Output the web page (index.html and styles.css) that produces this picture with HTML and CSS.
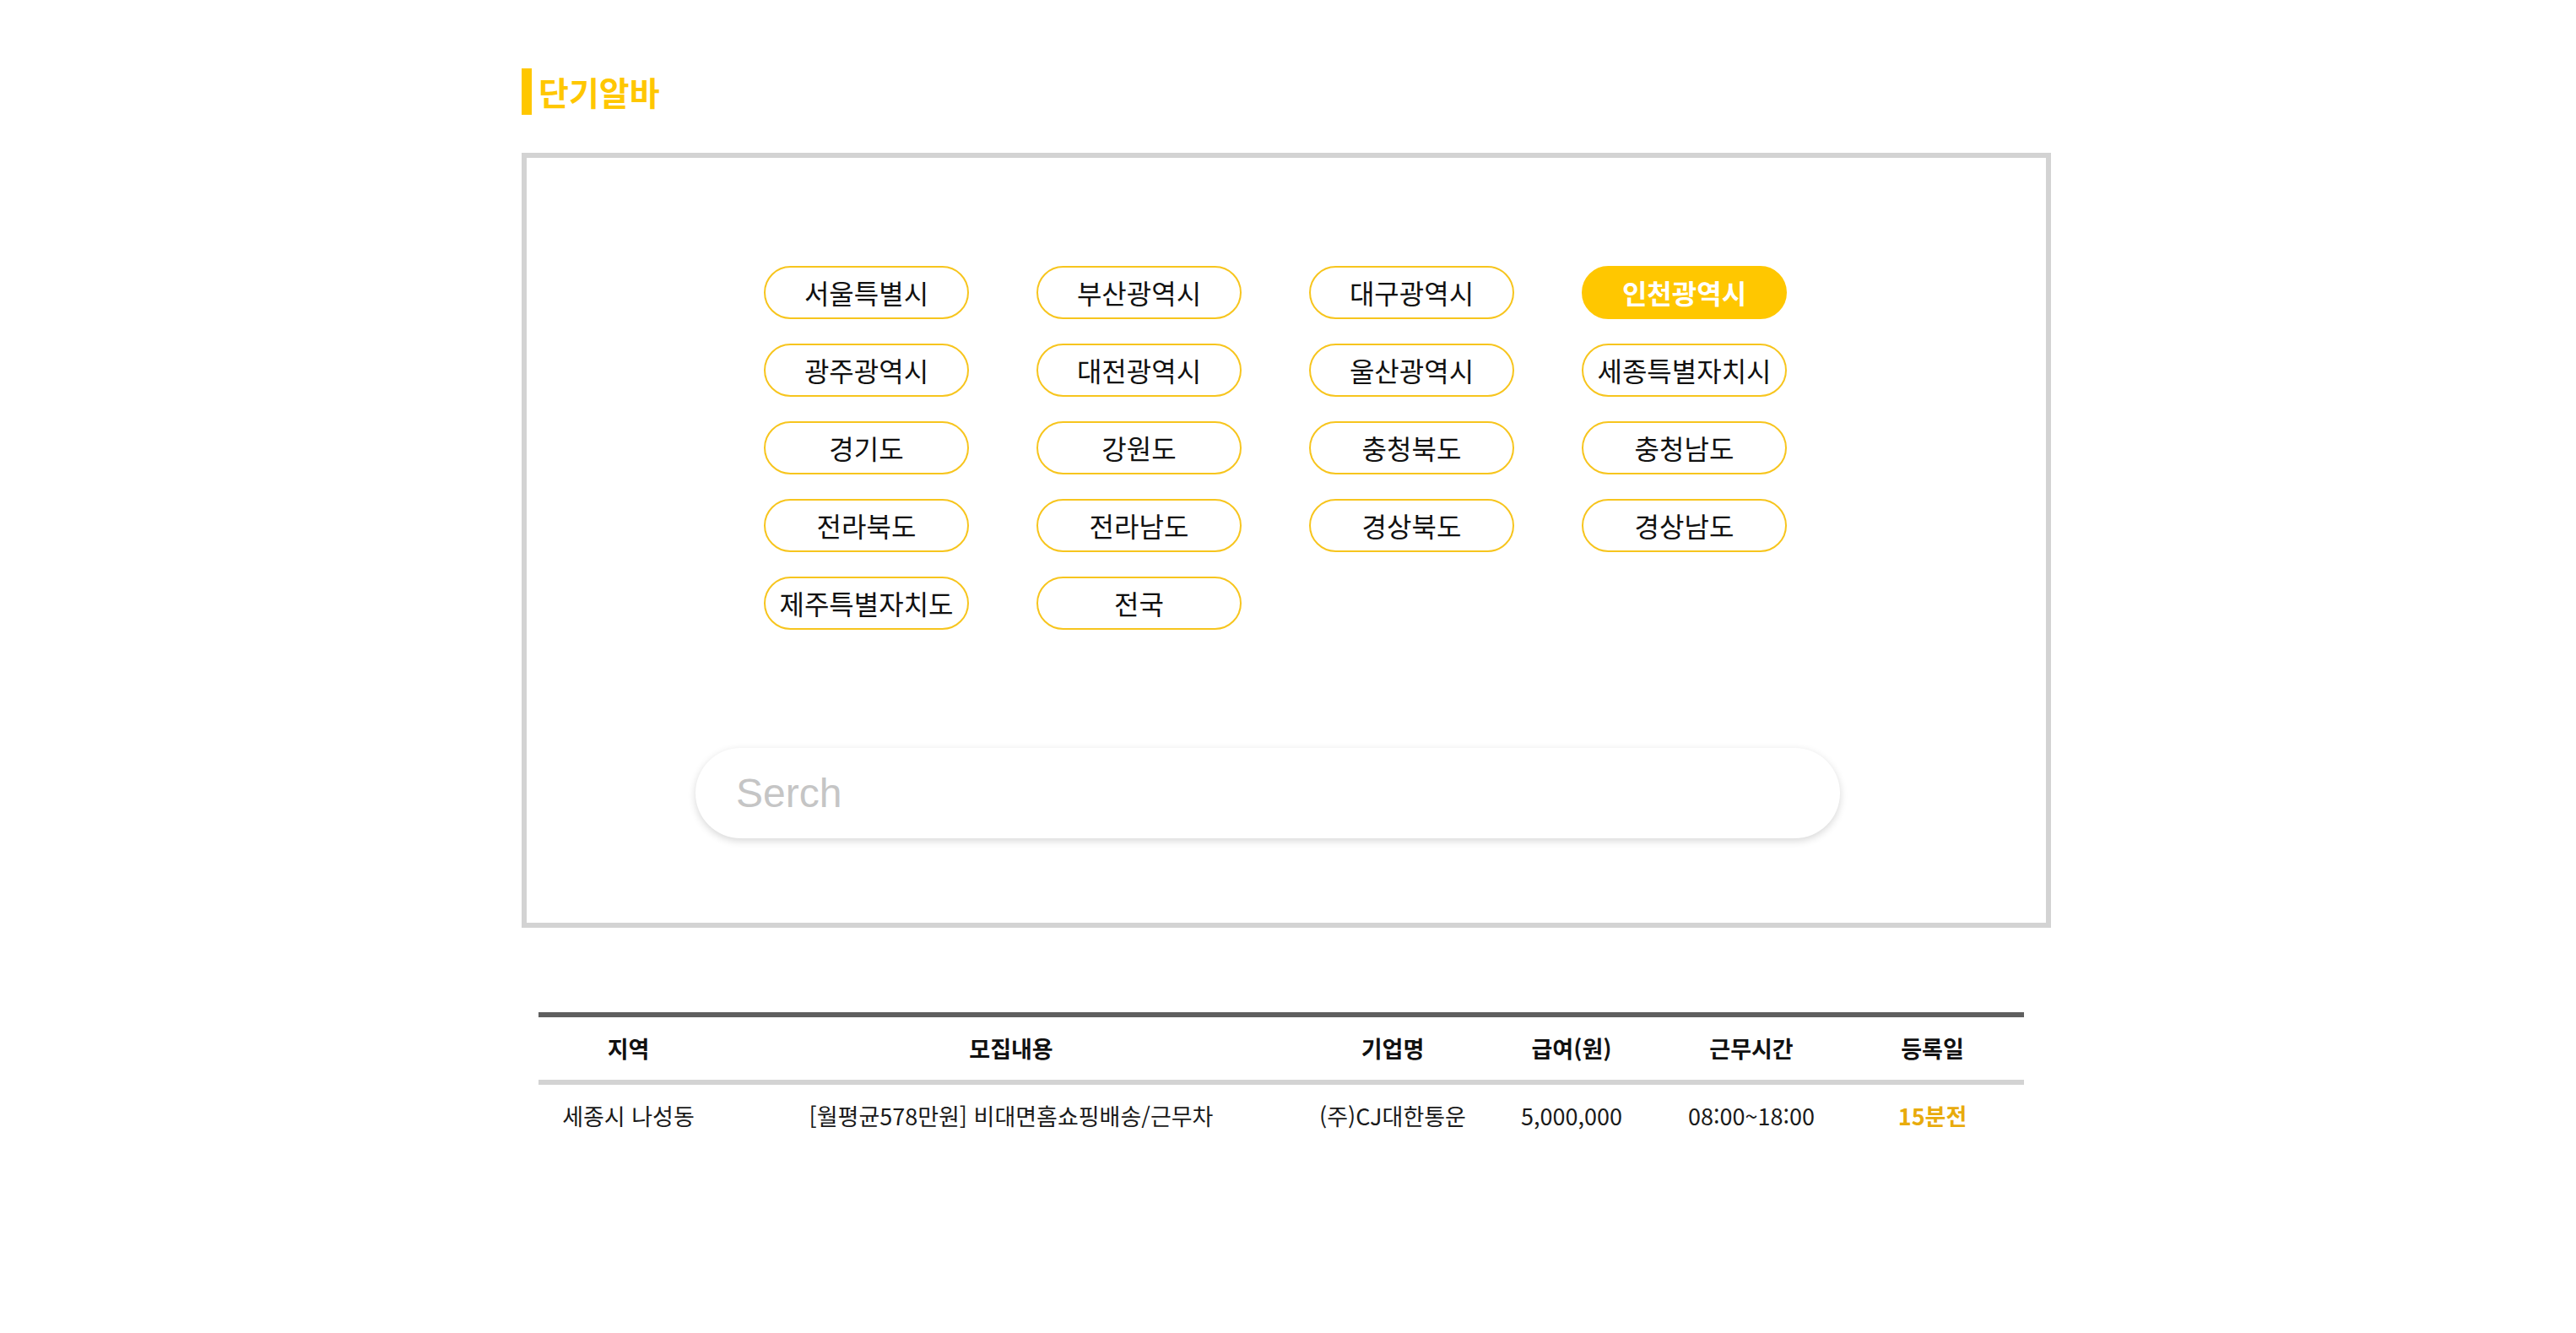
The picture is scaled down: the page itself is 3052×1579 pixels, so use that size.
FILE: index.html
```html
<!DOCTYPE html>
<html lang="ko">
<head>
<meta charset="utf-8">
<title>단기알바</title>
<link rel="stylesheet" href="styles.css">
</head>
<body>
<div class="wrap">
  <h2 class="title">단기알바</h2>
  <section class="panel">
    <ul class="regions">
      <li class="pill">서울특별시</li>
      <li class="pill">부산광역시</li>
      <li class="pill">대구광역시</li>
      <li class="pill active">인천광역시</li>
      <li class="pill">광주광역시</li>
      <li class="pill">대전광역시</li>
      <li class="pill">울산광역시</li>
      <li class="pill">세종특별자치시</li>
      <li class="pill">경기도</li>
      <li class="pill">강원도</li>
      <li class="pill">충청북도</li>
      <li class="pill">충청남도</li>
      <li class="pill">전라북도</li>
      <li class="pill">전라남도</li>
      <li class="pill">경상북도</li>
      <li class="pill">경상남도</li>
      <li class="pill">제주특별자치도</li>
      <li class="pill">전국</li>
    </ul>
    <div class="search">
      <input class="search-input" type="text" placeholder="Serch">
    </div>
  </section>
  <table class="jobs">
    <colgroup>
      <col class="c1"><col class="c2"><col class="c3"><col class="c4"><col class="c5"><col class="c6">
    </colgroup>
    <thead>
      <tr>
        <th>지역</th>
        <th>모집내용</th>
        <th>기업명</th>
        <th>급여(원)</th>
        <th>근무시간</th>
        <th>등록일</th>
      </tr>
    </thead>
    <tbody>
      <tr>
        <td>세종시 나성동</td>
        <td>[월평균578만원] 비대면홈쇼핑배송/근무차</td>
        <td>(주)CJ대한통운</td>
        <td>5,000,000</td>
        <td>08:00~18:00</td>
        <td class="recent">15분전</td>
      </tr>
    </tbody>
  </table>
</div>
</body>
</html>
```

FILE: styles.css
```css
* {
  box-sizing: border-box;
}

html, body {
  margin: 0;
  padding: 0;
  background: #ffffff;
}

body {
  font-family: "Noto Sans CJK KR", "Noto Sans", sans-serif;
  color: #111111;
}

.wrap {
  width: 1812px;
  margin-left: 618px;
  padding-top: 81px;
  padding-bottom: 200px;
}

.title {
  margin: 0;
  height: 55px;
  border-left: 12px solid #ffc700;
  padding-left: 8px;
  font-size: 39px;
  line-height: 55px;
  font-weight: 700;
  color: #ffc700;
}

.panel {
  margin-top: 45px;
  border: 6px solid #d3d3d3;
  padding: 128px 0 100px 0;
}

.regions {
  list-style: none;
  margin: 0 0 0 281px;
  padding: 0;
  display: grid;
  grid-template-columns: repeat(4, 243px);
  column-gap: 80px;
  row-gap: 29px;
}

.pill {
  height: 63px;
  border: 2px solid #f7c51e;
  border-radius: 32px;
  font-size: 32px;
  line-height: 58px;
  text-align: center;
  color: #111111;
  white-space: nowrap;
}

.pill.active {
  background: #ffc700;
  border-color: #ffc700;
  color: #ffffff;
  font-weight: 700;
}

.search {
  margin: 140px 0 0 200px;
}

.search-input {
  display: block;
  width: 1356px;
  height: 107px;
  border: none;
  outline: none;
  border-radius: 54px;
  padding: 0 48px;
  background: #ffffff;
  box-shadow: 0 3px 10px rgba(0, 0, 0, 0.16);
  font-family: "Liberation Sans", Arial, sans-serif;
  font-size: 48px;
  color: #333333;
}

.search-input::placeholder {
  color: #c5c5c5;
}

.jobs {
  margin: 100px 0 0 20px;
  width: 1760px;
  table-layout: fixed;
  border-collapse: separate;
  border-spacing: 0;
  border-top: 6px solid #5f5f5f;
}

.c1 { width: 213px; }
.c2 { width: 694px; }
.c3 { width: 210px; }
.c4 { width: 214px; }
.c5 { width: 212px; }
.c6 { width: 217px; }

.jobs th,
.jobs td {
  padding: 0;
  text-align: center;
  white-space: nowrap;
  font-size: 27px;
  line-height: 74px;
  height: 74px;
}

.jobs th {
  font-weight: 700;
  color: #111111;
  border-bottom: 6px solid #d3d3d3;
}

.jobs td {
  font-weight: 400;
  color: #1a1a1a;
}

.jobs td.recent {
  font-weight: 700;
  color: #e8ab0c;
}
```
